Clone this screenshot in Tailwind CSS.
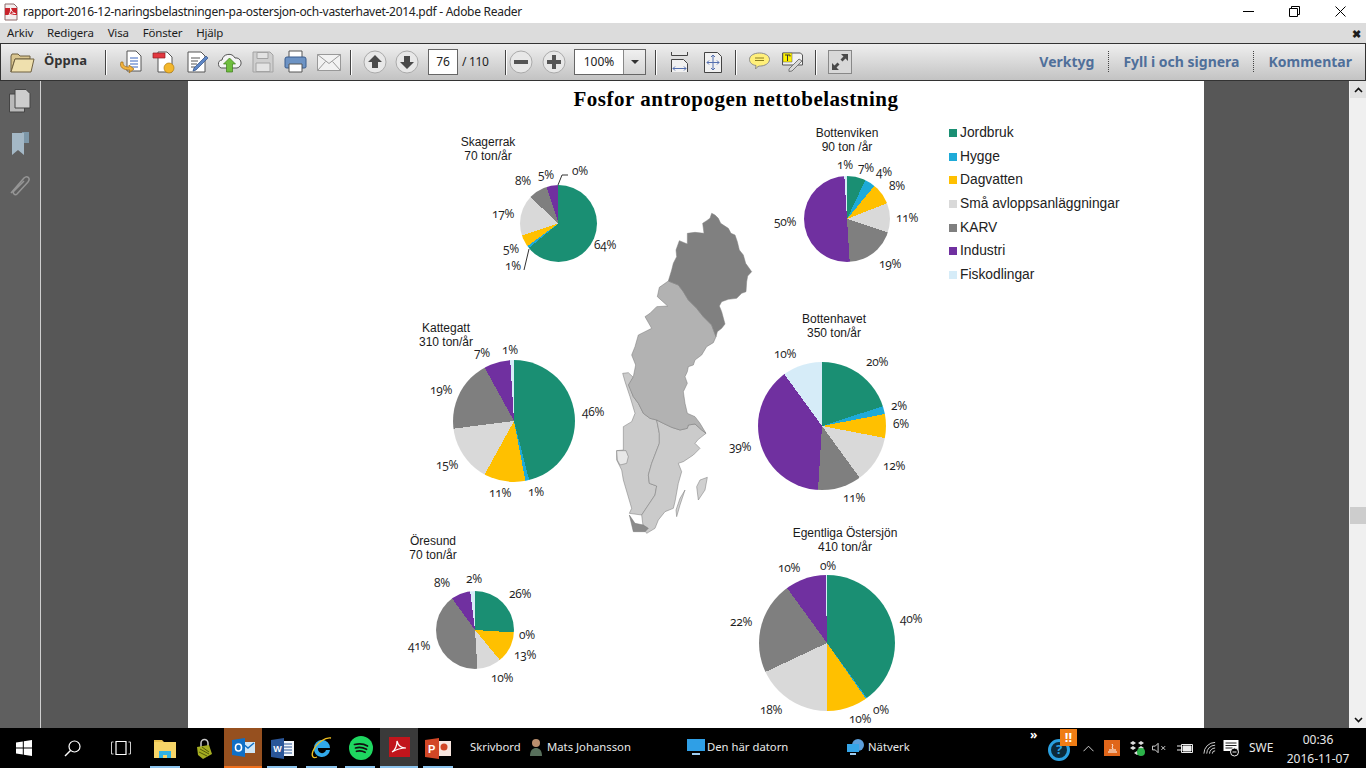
<!doctype html>
<html lang="sv"><head><meta charset="utf-8"><title>Adobe Reader</title>
<script src="https://cdn.jsdelivr.net/npm/@tailwindcss/browser@4"></script></head>
<body class="w-[1366px] h-[768px] overflow-hidden bg-white font-['Noto_Sans',sans-serif] text-black">
<div class="flex flex-col h-[768px]">
<!-- title -->
<div class="h-[23px] flex items-center bg-white shrink-0">
 <svg class="ml-[2px] w-[18px] h-[18px]" viewBox="0 0 18 18"><path d="M3 1h9l3 3v13H3z" fill="#f4eeee" stroke="#8d6b6b"/><path d="M3 5h12v7H3z" fill="#c8232c"/><path d="M6 13c2-2 3-5 2.500-8 1 3 2 5 5 5.500-3 0-5 1-7.500 2.500z" fill="none" stroke="#fff"/></svg>
 <span class="ml-[3px] text-[12px] tracking-[-0.28px] text-[#222] whitespace-nowrap">rapport-2016-12-naringsbelastningen-pa-ostersjon-och-vasterhavet-2014.pdf - Adobe Reader</span>
 <div class="ml-auto flex items-center">
  <div class="w-[46px] flex justify-center"><div class="w-[11px] h-px bg-black"></div></div>
  <div class="w-[46px] flex justify-center"><svg class="w-[11px] h-[11px]" viewBox="0 0 11 11"><path d="M.5 2.500h8v8h-8zM2.500 2.500v-2h8v8h-2" fill="none" stroke="#000"/></svg></div>
  <div class="w-[46px] mr-[3px] flex justify-center"><svg class="w-[11px] h-[11px]" viewBox="0 0 11 11"><path d="M.5.500l10 10M10.500.500l-10 10" stroke="#000"/></svg></div>
 </div>
</div>
<!-- menu -->
<div class="h-[20px] bg-[#dcdcdc] flex items-center text-[11.500px] tracking-[-0.2px] text-[#1c1c1c] pl-[7px] shrink-0">
 <span>Arkiv</span><span class="ml-[14px]">Redigera</span><span class="ml-[14px]">Visa</span><span class="ml-[14px]">Fönster</span><span class="ml-[14px]">Hjälp</span>
 <span class="ml-auto mr-[5px] text-[11px] font-bold leading-none">✖</span>
</div>
<!-- toolbar -->
<div class="h-[38px] shrink-0 flex items-center border-y-[1.5px] border-x border-[#333] bg-gradient-to-b from-[#efefef] to-[#c3c3c3]">
 <svg class="ml-[9px] w-[25px] h-[21px]" viewBox="0 0 25 21"><path d="M1 20V4l1-2h6l2 2h10v3H5L1 20z" fill="#d9c58f" stroke="#6f6040"/><path d="M1 20L5 7h19l-3 13z" fill="#efe0ae" stroke="#6f6040"/></svg>
 <span class="ml-[9px] w-[42px] pb-[2px] text-[13px] font-bold text-[#333]">Öppna</span>
 <div class="ml-[19px] w-px h-[25px] bg-[#444] border-r border-white box-content"></div>
 <div class="ml-[7px] flex items-center">
  <div class="w-[33px] flex justify-center"><svg class="w-[24px] h-[24px]" viewBox="0 0 24 24"><path d="M8 1h9l5 5v15H8z" fill="#fff" stroke="#555"/><path d="M11 8h8M11 11h8M11 14h8M11 17h8" stroke="#3a66c0"/><path d="M2 12c-2 5 2 8 9 8l-1 3 5-4-5-4v2c-4 0-6-1-6-5z" fill="#f2b33d" stroke="#a06a10" stroke-width=".7"/></svg></div>
  <div class="w-[33px] flex justify-center"><svg class="w-[24px] h-[24px]" viewBox="0 0 24 24"><path d="M6 2h9l5 5v15H6z" fill="#fff" stroke="#555"/><path d="M1 3h12v5H1z" fill="#e2383f" stroke="#8c1e22" stroke-width=".7"/><circle cx="17" cy="18" r="5" fill="#f3b72c" stroke="#b27d10" stroke-width=".7"/></svg></div>
  <div class="w-[33px] flex justify-center"><svg class="w-[24px] h-[24px]" viewBox="0 0 24 24"><path d="M3 2h13l4 4v16H3z" fill="#fff" stroke="#555"/><path d="M6 8h9M6 11h7M6 14h6M6 17h4" stroke="#555"/><path d="M9 18l12-12 2 2-12 12-3 1z" fill="#5d86c5" stroke="#2e4e85" stroke-width=".7"/></svg></div>
  <div class="w-[33px] flex justify-center"><svg class="w-[25px] h-[24px]" viewBox="0 0 25 24"><path d="M6 18a4 4 0 0 1-1-8 7 7 0 0 1 13-2 5 5 0 0 1 2 10z" fill="#f4f4f4" stroke="#555"/><path d="M12.500 8l6 6h-3v8h-6v-8h-3z" fill="#6fbe3e" stroke="#3e7d1a" stroke-width=".7"/></svg></div>
  <div class="w-[33px] flex justify-center"><svg class="w-[22px] h-[22px]" viewBox="0 0 22 22"><path d="M1 1h17l3 3v17H1z" fill="#cfcfcf" stroke="#a3a3a3"/><path d="M5 1.500h11v6H5zM4 12h14v8.500H4z" fill="#e3e3e3" stroke="#a3a3a3"/></svg></div>
  <div class="w-[33px] flex justify-center"><svg class="w-[23px] h-[24px]" viewBox="0 0 23 24"><path d="M5 1h13v8H5z" fill="#fff" stroke="#555"/><path d="M1 9q0-2 2-2h17q2 0 2 2v8q0 1-2 1H3q-2 0-2-1z" fill="#6d93c4" stroke="#3a5c8d"/><path d="M5 14h13v8H5z" fill="#fff" stroke="#555"/></svg></div>
  <div class="w-[33px] flex justify-center"><svg class="w-[24px] h-[17px]" viewBox="0 0 24 17"><path d="M.5.500h23v16H.5z" fill="#f2f2f2" stroke="#999"/><path d="M.5.500l11.500 9 11.500-9M.5 16.500l8-9M23.500 16.500l-8-9" fill="none" stroke="#999"/></svg></div>
 </div>
 <div class="ml-[5px] w-px h-[25px] bg-[#444] border-r border-white box-content"></div>
 <div class="ml-[7px] flex">
  <div class="w-[32px] flex justify-center"><svg class="w-[24px] h-[24px]" viewBox="0 0 24 24"><circle cx="12" cy="12" r="11" fill="#e8e8e8" stroke="#aaa"/><path d="M12 5l7 7h-4v6H9v-6H5z" fill="#4a4a4a"/></svg></div>
  <div class="w-[32px] flex justify-center"><svg class="w-[24px] h-[24px]" viewBox="0 0 24 24"><circle cx="12" cy="12" r="11" fill="#e8e8e8" stroke="#aaa"/><path d="M12 19l7-7h-4V6H9v6H5z" fill="#4a4a4a"/></svg></div>
 </div>
 <div class="ml-[5px] w-[30px] h-[26px] bg-white border border-[#666] flex items-center justify-center text-[12px] text-[#222]">76</div>
 <span class="ml-[4px] text-[12px] tracking-[-0.3px] text-[#222] w-[28px] whitespace-nowrap">/ 110</span>
 <div class="ml-[15px] w-px h-[25px] bg-[#444] border-r border-white box-content"></div>
 <div class="ml-[2px] flex gap-[9px]">
  <svg class="w-[24px] h-[24px]" viewBox="0 0 24 24"><circle cx="12" cy="12" r="11" fill="#e8e8e8" stroke="#aaa"/><path d="M5 10h14v4H5z" fill="#555"/></svg>
  <svg class="w-[24px] h-[24px]" viewBox="0 0 24 24"><circle cx="12" cy="12" r="11" fill="#e8e8e8" stroke="#aaa"/><path d="M10 5h4v5h5v4h-5v5h-4v-5H5v-4h5z" fill="#555"/></svg>
 </div>
 <div class="ml-[8px] w-[72px] h-[26px] border border-[#666] bg-white flex">
  <div class="flex-1 flex items-center justify-center text-[12px] text-[#222]">100%</div>
  <div class="w-[22px] border-l border-[#888] bg-gradient-to-b from-[#f0f0f0] to-[#d5d5d5] flex items-center justify-center"><div class="w-0 h-0 border-x-[4px] border-x-transparent border-t-[4px] border-t-[#333]"></div></div>
 </div>
 <div class="ml-[9px] w-px h-[25px] bg-[#444] border-r border-white box-content"></div>
 <div class="ml-[6px] flex">
  <div class="w-[33px] flex justify-center"><svg class="w-[17px] h-[21px]" viewBox="0 0 17 21"><path d="M.5 0v3.500h16V0" fill="#e8e8e8" stroke="#444"/><path d="M.5 20V7.500h12l4 4V20" fill="#f1f1f1" stroke="#444"/><path d="M2 16.500h13M2 16.500l2-2M2 16.500l2 2M15 16.500l-2-2M15 16.500l-2 2" stroke="#5570b0"/></svg></div>
  <div class="w-[33px] flex justify-center"><svg class="w-[18px] h-[21px]" viewBox="0 0 18 21"><path d="M.5.500h13l4 4v16H.5z" fill="#f1f1f1" stroke="#444"/><path d="M9 3v15M3 10.500h12M9 3l-2 2M9 3l2 2M9 18l-2-2M9 18l2-2M3 10.500l2-2M3 10.500l2 2M15 10.500l-2-2M15 10.500l-2 2" stroke="#5570b0" fill="none"/></svg></div>
 </div>
 <div class="ml-[6px] w-px h-[25px] bg-[#444] border-r border-white box-content"></div>
 <div class="ml-[6px] flex">
  <div class="w-[33px] flex justify-center"><svg class="w-[21px] h-[18px]" viewBox="0 0 21 18"><path d="M10.500 1c5.500 0 10 2.500 10 6.500s-5 6.500-9 6.500c-2 0-3 .5-5 3l.5-3.500C3 13 .5 10.500.5 7.500.5 3.500 5 1 10.500 1z" fill="#ffef7a" stroke="#8a8a8a"/><path d="M6 6h9M6 8.500h9" stroke="#8a7d20"/></svg></div>
  <div class="w-[33px] flex justify-center"><svg class="w-[21px] h-[20px]" viewBox="0 0 21 20"><path d="M.5 1h18l2 2v10H.5z" fill="#f2f2f2" stroke="#555"/><path d="M1 1h9v9H1z" fill="#fff200" stroke="#555" stroke-width=".5"/><path d="M3 3h5v1.500M5.500 3v6" stroke="#333" fill="none"/><path d="M7 17L17 7l3 2-10 10-3 .5z" fill="#d9d9d9" stroke="#777"/></svg></div>
 </div>
 <div class="ml-[6px] w-px h-[25px] bg-[#444] border-r border-white box-content"></div>
 <div class="ml-[11px] w-[24px] h-[24px] border border-[#888] bg-[#d8d8d8] flex items-center justify-center"><svg class="w-[20px] h-[20px]" viewBox="0 0 20 20"><path d="M18 2h-7l2.500 2.500-3 3 2 2 3-3L18 9zM2 18h7l-2.500-2.500 3-3-2-2-3 3L2 11z" fill="#4a4a4a"/></svg></div>
 <div class="ml-auto flex items-center text-[14px] font-bold text-[#4f6f9a] pr-[13px] pb-[2px]">
  <span>Verktyg</span><div class="mx-[14px] h-[21px] border-l border-dotted border-[#444]"></div>
  <span>Fyll i och signera</span><div class="mx-[14px] h-[21px] border-l border-dotted border-[#444]"></div>
  <span>Kommentar</span>
 </div>
</div>
<!-- main -->
<div class="flex flex-1 min-h-0">
 <div class="w-[40px] bg-[#5f5f5f] flex flex-col items-center pt-[8px] shrink-0">
  <svg class="w-[22px] h-[24px]" viewBox="0 0 22 24"><path d="M.5 5h15v18H.5z" fill="#b9b9b9" stroke="#444"/><path d="M6 .5h11l4 4V19H6z" fill="#cdcdcd" stroke="#444"/></svg>
  <svg class="w-[17px] h-[23px] mt-[19px]" viewBox="0 0 17 23"><path d="M10 0h7v11h-7z" fill="#7d97a8"/><path d="M0 1h12v22l-6-5-6 5z" fill="#a4b8c6"/></svg>
  <svg class="w-[22px] h-[23px] mt-[19px]" viewBox="0 0 22 23"><path d="M2 19L15 4c3-3 7 0 4 4L8 20c-2 2-5-1-3-3L15 7" fill="none" stroke="#959595" stroke-width="1.500"/></svg>
 </div>
 <div class="w-[1px] bg-[#cfcfcf] shrink-0"></div>
 <div class="flex-1 bg-[#575757] flex justify-start pl-[147px] overflow-hidden">
  <!-- page: free canvas of diagrams -->
  <div class="relative w-[1016px] h-[647px] bg-white shrink-0 overflow-hidden font-['Liberation_Sans',sans-serif] text-[#1a1a1a]">
   <h1 class="absolute left-[548px] top-[19px] -translate-x-1/2 -translate-y-1/2 whitespace-nowrap font-['Liberation_Serif',serif] font-bold text-[21px] tracking-[0.5px] text-black">Fosfor antropogen nettobelastning</h1>

   <!-- map -->
   <svg class="absolute left-[412px] top-[119px] w-[170px] h-[350px]" viewBox="0 0 510 1050">
    <g stroke="#777" stroke-width="1.500" stroke-linejoin="round">
    <polygon fill="#cbcbcb" points="68,520 85,518 100,532 88,555 100,590 115,610 130,640 150,655 170,660 178,700 178,730 155,790 145,825 148,850 170,858 165,885 125,945 88,940 95,925 70,840 65,810 50,780 50,752 70,750 70,680 95,665 105,640 90,590 75,545"/>
    <polygon fill="#cbcbcb" points="170,660 190,670 215,682 240,690 262,685 265,675 285,672 305,690 318,700 295,718 285,730 300,745 280,765 250,785 235,790 245,815 235,850 225,905 220,925 195,935 175,960 165,985 140,1000 130,985 125,945 165,885 170,858 148,850 145,825 155,790 178,730 178,700"/>
    <polygon fill="#b2b2b2" points="205,243 235,255 250,275 265,300 290,325 310,350 335,375 348,410 340,428 320,440 305,465 285,480 280,495 265,500 262,515 255,530 262,550 250,575 255,610 262,640 285,650 300,670 318,700 305,690 285,672 265,675 262,685 240,690 215,682 190,670 170,660 150,655 130,640 115,610 100,590 85,555 100,530 107,495 95,465 105,440 115,405 135,395 155,385 135,350 150,340 170,320 203,318 172,290 178,262"/>
    <polygon fill="#808080" stroke="#808080" points="335,40 345,45 355,55 362,70 385,85 393,100 405,105 412,125 418,150 430,165 437,190 455,215 443,228 440,245 438,275 425,280 410,295 385,298 365,305 358,318 365,335 375,372 365,385 352,395 348,410 335,375 310,350 290,325 265,300 250,275 235,255 205,243 215,210 220,190 230,170 228,150 238,122 262,132 262,100 285,97 312,100 308,70 320,62 330,55"/>
    <polygon fill="#8b8b8b" points="88,945 105,970 130,975 145,985 135,995 100,995"/>
    <polygon fill="#e8e8e8" points="50,752 78,752 85,770 80,790 60,795 52,780"/>
    <polygon fill="#d0d0d0" points="300,840 322,832 315,870 295,900 290,860"/>
    <polygon fill="#d0d0d0" points="255,870 240,915 230,950 228,930 240,895"/>
    </g>
   </svg>

   <!-- pies -->
   <div class="absolute left-[332px] top-[104px] w-[77px] h-[77px] rounded-full bg-[conic-gradient(#1a8f73_0_64%,#1eaad8_64%_65%,#ffc000_65%_70%,#d9d9d9_70%_87%,#7f7f7f_87%_95%,#7030a0_95%_100%)]"></div>
   <div class="absolute left-[616px] top-[95px] w-[86px] h-[86px] rounded-full bg-[conic-gradient(#1a8f73_0_7%,#1eaad8_7%_11%,#ffc000_11%_19%,#d9d9d9_19%_30%,#7f7f7f_30%_49%,#7030a0_49%_99%,#d6ecf8_99%_100%)]"></div>
   <div class="absolute left-[265px] top-[279px] w-[122px] h-[122px] rounded-full bg-[conic-gradient(#1a8f73_0_46%,#1eaad8_46%_47%,#ffc000_47%_58%,#d9d9d9_58%_73%,#7f7f7f_73%_92%,#7030a0_92%_99%,#d6ecf8_99%_100%)]"></div>
   <div class="absolute left-[570px] top-[281px] w-[128px] h-[128px] rounded-full bg-[conic-gradient(#1a8f73_0_20%,#1eaad8_20%_22%,#ffc000_22%_28%,#d9d9d9_28%_40%,#7f7f7f_40%_51%,#7030a0_51%_90%,#d6ecf8_90%_100%)]"></div>
   <div class="absolute left-[248px] top-[510px] w-[78px] h-[78px] rounded-full bg-[conic-gradient(#1a8f73_0_26%,#ffc000_26%_39%,#d9d9d9_39%_49%,#7f7f7f_49%_90%,#7030a0_90%_98%,#d6ecf8_98%_100%)]"></div>
   <div class="absolute left-[571px] top-[494px] w-[136px] h-[136px] rounded-full bg-[conic-gradient(#1a8f73_0_40%,#1eaad8_40%_40.300%,#ffc000_40.300%_50%,#d9d9d9_50%_68%,#7f7f7f_68%_90%,#7030a0_90%_99.700%,#d6ecf8_99.700%_100%)]"></div>

   <!-- leader lines -->
   <svg class="absolute left-0 top-0 w-[1016px] h-[647px] pointer-events-none" viewBox="0 0 1016 647"><path d="M370 104l4-10h6M341 168l-5 21" fill="none" stroke="#333"/></svg>

   <!-- region names -->
   <p class="absolute left-[300px] top-[54px] -translate-x-1/2 text-center text-[12px] leading-[14px] whitespace-nowrap">Skagerrak<br>70 ton/år</p>
   <p class="absolute left-[659px] top-[45px] -translate-x-1/2 text-center text-[12px] leading-[14px] whitespace-nowrap">Bottenviken<br>90 ton /år</p>
   <p class="absolute left-[258px] top-[240px] -translate-x-1/2 text-center text-[12px] leading-[14px] whitespace-nowrap">Kattegatt<br>310 ton/år</p>
   <p class="absolute left-[646px] top-[231px] -translate-x-1/2 text-center text-[12px] leading-[14px] whitespace-nowrap">Bottenhavet<br>350 ton/år</p>
   <p class="absolute left-[245px] top-[453px] -translate-x-1/2 text-center text-[12px] leading-[14px] whitespace-nowrap">Öresund<br>70 ton/år</p>
   <p class="absolute left-[657px] top-[445px] -translate-x-1/2 text-center text-[12px] leading-[14px] whitespace-nowrap">Egentliga Östersjön<br>410 ton/år</p>

   <!-- percent labels -->
   <div class="font-['Open_Sans',serif] oldstyle-nums text-[12px] tracking-[-0.3px] text-[#222]">
    <span class="absolute left-[417px] top-[164px] -translate-x-1/2 -translate-y-1/2">64%</span>
    <span class="absolute left-[392px] top-[90px] -translate-x-1/2 -translate-y-1/2">0%</span>
    <span class="absolute left-[358px] top-[94px] -translate-x-1/2 -translate-y-1/2">5%</span>
    <span class="absolute left-[335px] top-[100px] -translate-x-1/2 -translate-y-1/2">8%</span>
    <span class="absolute left-[315px] top-[133px] -translate-x-1/2 -translate-y-1/2">17%</span>
    <span class="absolute left-[323px] top-[168px] -translate-x-1/2 -translate-y-1/2">5%</span>
    <span class="absolute left-[325px] top-[185px] -translate-x-1/2 -translate-y-1/2">1%</span>

    <span class="absolute left-[657px] top-[84px] -translate-x-1/2 -translate-y-1/2">1%</span>
    <span class="absolute left-[678px] top-[87px] -translate-x-1/2 -translate-y-1/2">7%</span>
    <span class="absolute left-[696px] top-[91px] -translate-x-1/2 -translate-y-1/2">4%</span>
    <span class="absolute left-[709px] top-[105px] -translate-x-1/2 -translate-y-1/2">8%</span>
    <span class="absolute left-[719px] top-[137px] -translate-x-1/2 -translate-y-1/2">11%</span>
    <span class="absolute left-[702px] top-[183px] -translate-x-1/2 -translate-y-1/2">19%</span>
    <span class="absolute left-[597px] top-[141px] -translate-x-1/2 -translate-y-1/2">50%</span>

    <span class="absolute left-[405px] top-[331px] -translate-x-1/2 -translate-y-1/2">46%</span>
    <span class="absolute left-[348px] top-[411px] -translate-x-1/2 -translate-y-1/2">1%</span>
    <span class="absolute left-[312px] top-[412px] -translate-x-1/2 -translate-y-1/2">11%</span>
    <span class="absolute left-[259px] top-[384px] -translate-x-1/2 -translate-y-1/2">15%</span>
    <span class="absolute left-[253px] top-[309px] -translate-x-1/2 -translate-y-1/2">19%</span>
    <span class="absolute left-[294px] top-[272px] -translate-x-1/2 -translate-y-1/2">7%</span>
    <span class="absolute left-[322px] top-[269px] -translate-x-1/2 -translate-y-1/2">1%</span>

    <span class="absolute left-[689px] top-[281px] -translate-x-1/2 -translate-y-1/2">20%</span>
    <span class="absolute left-[711px] top-[325px] -translate-x-1/2 -translate-y-1/2">2%</span>
    <span class="absolute left-[713px] top-[343px] -translate-x-1/2 -translate-y-1/2">6%</span>
    <span class="absolute left-[706px] top-[385px] -translate-x-1/2 -translate-y-1/2">12%</span>
    <span class="absolute left-[666px] top-[417px] -translate-x-1/2 -translate-y-1/2">11%</span>
    <span class="absolute left-[552px] top-[366px] -translate-x-1/2 -translate-y-1/2">39%</span>
    <span class="absolute left-[597px] top-[273px] -translate-x-1/2 -translate-y-1/2">10%</span>

    <span class="absolute left-[332px] top-[513px] -translate-x-1/2 -translate-y-1/2">26%</span>
    <span class="absolute left-[339px] top-[554px] -translate-x-1/2 -translate-y-1/2">0%</span>
    <span class="absolute left-[337px] top-[574px] -translate-x-1/2 -translate-y-1/2">13%</span>
    <span class="absolute left-[314px] top-[597px] -translate-x-1/2 -translate-y-1/2">10%</span>
    <span class="absolute left-[231px] top-[565px] -translate-x-1/2 -translate-y-1/2">41%</span>
    <span class="absolute left-[254px] top-[502px] -translate-x-1/2 -translate-y-1/2">8%</span>
    <span class="absolute left-[286px] top-[498px] -translate-x-1/2 -translate-y-1/2">2%</span>

    <span class="absolute left-[723px] top-[538px] -translate-x-1/2 -translate-y-1/2">40%</span>
    <span class="absolute left-[693px] top-[629px] -translate-x-1/2 -translate-y-1/2">0%</span>
    <span class="absolute left-[672px] top-[638px] -translate-x-1/2 -translate-y-1/2">10%</span>
    <span class="absolute left-[583px] top-[629px] -translate-x-1/2 -translate-y-1/2">18%</span>
    <span class="absolute left-[553px] top-[541px] -translate-x-1/2 -translate-y-1/2">22%</span>
    <span class="absolute left-[601px] top-[487px] -translate-x-1/2 -translate-y-1/2">10%</span>
    <span class="absolute left-[640px] top-[485px] -translate-x-1/2 -translate-y-1/2">0%</span>
   </div>

   <!-- legend -->
   <ul class="absolute left-[761px] top-[44px] flex flex-col gap-[7.700px] text-[13.800px] leading-[16px] text-[#222]">
    <li class="flex items-center gap-[3px]"><i class="w-[8px] h-[8px] bg-[#1a8f73]"></i>Jordbruk</li>
    <li class="flex items-center gap-[3px]"><i class="w-[8px] h-[8px] bg-[#1eaad8]"></i>Hygge</li>
    <li class="flex items-center gap-[3px]"><i class="w-[8px] h-[8px] bg-[#ffc000]"></i>Dagvatten</li>
    <li class="flex items-center gap-[3px]"><i class="w-[8px] h-[8px] bg-[#d9d9d9]"></i>Små avloppsanläggningar</li>
    <li class="flex items-center gap-[3px]"><i class="w-[8px] h-[8px] bg-[#7f7f7f]"></i>KARV</li>
    <li class="flex items-center gap-[3px]"><i class="w-[8px] h-[8px] bg-[#7030a0]"></i>Industri</li>
    <li class="flex items-center gap-[3px]"><i class="w-[8px] h-[8px] bg-[#d6ecf8]"></i>Fiskodlingar</li>
   </ul>
  </div>
 </div>
 <div class="w-[17px] bg-[#f0f0f0] shrink-0 flex flex-col items-center pl-[1px]">
  <div class="w-full h-[17px] bg-[#e2e2e2] flex items-center justify-center"><svg class="w-[9px] h-[6px]" viewBox="0 0 9 6"><path d="M1 5l3.500-3.500L8 5" fill="none" stroke="#111" stroke-width="1.600"/></svg></div>
  <div class="w-full h-[17px] bg-[#cdcdcd] mt-[409px]"></div>
  <div class="w-full h-[17px] mt-auto flex items-center justify-center"><svg class="w-[9px] h-[6px]" viewBox="0 0 9 6"><path d="M1 1l3.500 3.500L8 1" fill="none" stroke="#111" stroke-width="1.600"/></svg></div>
 </div>
</div>
<!-- taskbar -->
<div class="h-[40px] bg-black shrink-0 flex text-[11.300px] text-[#e8e8e8]">
 <div class="w-[48px] flex items-center justify-center"><svg class="w-[16px] h-[16px]" viewBox="0 0 16 16"><path d="M0 2.500l6.800-1v6H0zM7.800 1.300L16 0v7.500H7.800zM0 8.500h6.800v6l-6.800-1zM7.800 8.500H16V16l-8.200-1.300z" fill="#fff"/></svg></div>
 <div class="w-[48px] flex items-center justify-center"><svg class="w-[17px] h-[17px]" viewBox="0 0 17 17"><circle cx="10.500" cy="6.500" r="5.500" fill="none" stroke="#fff" stroke-width="1.200"/><path d="M6.500 10.500L1 16" stroke="#fff" stroke-width="1.400"/></svg></div>
 <div class="w-[49px] flex items-center justify-center"><svg class="w-[20px] h-[14px]" viewBox="0 0 20 14"><path d="M5 .5h10v13H5z" fill="none" stroke="#fff" stroke-width="1.200"/><path d="M2.500 1H.5v12h2M17.500 1h2v12h-2" fill="none" stroke="#ccc"/></svg></div>
 <div class="w-[40px] relative flex items-center justify-center"><svg class="w-[22px] h-[19px]" viewBox="0 0 22 19"><path d="M0 3V1h8l2 2z" fill="#e8c04e"/><path d="M0 3h22v16H0z" fill="#f6d568"/><path d="M5 19v-7h12v7h-4v-3H9v3z" fill="#31b3e6"/></svg><div class="absolute bottom-0 left-[5px] w-[30px] h-[2px] bg-[#8cc4ee]"></div></div>
 <div class="w-[39px] flex items-center justify-center"><svg class="w-[15px] h-[22px]" viewBox="0 0 15 22"><path d="M4 10V6a3.500 3.500 0 0 1 7 0v4" fill="none" stroke="#c7c7c7" stroke-width="1.500"/><path d="M0 10l12-2 3 9-9 5-5-4z" fill="#a5ad21"/><path d="M3 12l9 5M2 15l8 4M5 10l7 5" stroke="#525a08"/></svg></div>
 <div class="w-[38px] bg-[#96501f] flex items-center justify-center border-b-[2px] border-[#f0701c]"><svg class="w-[23px] h-[19px]" viewBox="0 0 23 19"><path d="M9 4h14v11H9z" fill="#cfe6f6"/><path d="M10 5l6 5 6-5" fill="none" stroke="#0f6fc6" stroke-width="1.400"/><path d="M0 2l13-2v19L0 17z" fill="#0f6fc6"/><ellipse cx="6.500" cy="9.500" rx="3" ry="3.500" fill="none" stroke="#fff" stroke-width="1.600"/></svg></div>
 <div class="w-[40px] relative flex items-center justify-center"><svg class="w-[23px] h-[21px]" viewBox="0 0 23 21"><path d="M9 3h14v15H9z" fill="#f4f7fb"/><path d="M13 6h8M13 9h8M13 12h8M13 15h8" stroke="#2a5699"/><path d="M0 2l13-2v21L0 19z" fill="#2a5699"/><text x="2.300" y="14" font-size="9" font-weight="700" fill="#fff" font-family="Liberation Sans">W</text></svg><div class="absolute bottom-0 left-[5px] w-[30px] h-[2px] bg-[#8cc4ee]"></div></div>
 <div class="w-[39px] relative flex items-center justify-center"><svg class="w-[24px] h-[24px]" viewBox="0 0 24 24"><path d="M4 12a8 8 0 0 1 16 0H8a4 4 0 0 0 8 2h4a8 8 0 0 1-16-2z" fill="#31a9ea"/><path d="M9 7h6a3 3 0 0 0-6 0z" fill="#31a9ea"/><path d="M21 2c-5-1-14 4-18 13-2 5 0 8 4 6" fill="none" stroke="#f0c020" stroke-width="1.300"/></svg><div class="absolute bottom-0 left-[4px] w-[31px] h-[2px] bg-[#8cc4ee]"></div></div>
 <div class="w-[39px] relative flex items-center justify-center"><svg class="w-[24px] h-[24px]" viewBox="0 0 24 24"><circle cx="12" cy="12" r="12" fill="#1ed760"/><path d="M5.500 8.500c4-1 9-1 13 1.500M6.500 12c3.500-1 7.500-.5 11 1.300M7.500 15.300c3-.8 6-.4 8.600 1" fill="none" stroke="#111" stroke-width="1.700" stroke-linecap="round"/></svg><div class="absolute bottom-0 left-[4px] w-[30px] h-[2px] bg-[#8cc4ee]"></div></div>
 <div class="w-[38px] bg-[#3a3a3a] flex items-center justify-center border-b-[2px] border-[#8cc4ee]"><svg class="w-[21px] h-[20px]" viewBox="0 0 21 20"><path d="M0 0h21v20H0z" fill="#c1151c"/><path d="M3 15c3-2 5-6 5-11 1 4 3 7 9 7-5 0-9 1-14 4z" fill="none" stroke="#fff" stroke-width="1.200"/></svg></div>
 <div class="w-[40px] relative flex items-center justify-center"><svg class="w-[26px] h-[21px]" viewBox="0 0 26 21"><path d="M12 3h14v15H12z" fill="#f8e6df"/><circle cx="19" cy="9" r="3.500" fill="#d24726"/><path d="M0 2l14-2v21L0 19z" fill="#d24726"/><text x="3" y="15" font-size="11" font-weight="700" fill="#fff" font-family="Liberation Sans">P</text></svg><div class="absolute bottom-0 left-[5px] w-[30px] h-[2px] bg-[#8cc4ee]"></div></div>
 <div class="flex items-center h-[40px] pb-[2px]">
  <span class="ml-[12px] w-[59px]">Skrivbord</span>
  <svg class="w-[14px] h-[18px]" viewBox="0 0 14 18"><circle cx="7" cy="5" r="4" fill="#b98e6d"/><path d="M1 18c0-6 3-8 6-8s6 2 6 8z" fill="#58705c"/></svg>
  <span class="ml-[4px] w-[140px]">Mats Johansson</span>
  <svg class="w-[18px] h-[16px]" viewBox="0 0 18 16"><path d="M0 0h18v12H0z" fill="#2f9fe6"/><path d="M5 14h8v2H5z" fill="#9fcdf0"/></svg>
  <span class="ml-[2px] w-[140px]">Den här datorn</span>
  <svg class="w-[18px] h-[17px]" viewBox="0 0 18 17"><circle cx="11" cy="6" r="6" fill="#5b9fdc"/><path d="M0 5h12v8H0z" fill="#35a5e8"/><path d="M3 14h6v2H3z" fill="#9fcdf0"/></svg>
  <span class="ml-[3px]">Nätverk</span>
 </div>
 <div class="ml-auto flex items-center">
  <div class="relative w-[22px] h-[22px] mt-[4px] rounded-full border-[3px] border-[#2aa0e0] bg-[#0c2a3a] flex items-center justify-center text-[13px] font-bold text-[#2aa0e0]">?
   <span class="absolute left-[-21px] top-[-13px] text-[12px] font-bold leading-none text-white">»</span>
   <div class="absolute left-[9px] top-[-13px] w-[17px] h-[17px] bg-[#ef7d14] text-white text-[13px] leading-[17px] font-bold text-center">!!</div>
  </div>
  <svg class="ml-[13px] w-[11px] h-[7px]" viewBox="0 0 12 7"><path d="M.5 6.500L6 1l5.500 5.500" fill="none" stroke="#ddd"/></svg>
  <div class="ml-[10px] w-[16px] h-[16px] bg-[#e0661a] flex items-center justify-center"><svg class="w-[11px] h-[11px]" viewBox="0 0 11 11"><path d="M1 9h9M2 7h7M5 1c2 2-1 3 1 5" fill="none" stroke="#fff"/></svg></div>
  <svg class="ml-[9px] w-[16px] h-[16px]" viewBox="0 0 16 16"><path d="M1 3l3-2 3 2-3 2zM9 3l3-2 3 2-3 2zM1 8l3-2 3 2-3 2zM9 8l3-2 3 2-3 2zM5 13l3-2 3 2-3 2z" fill="#ddd"/><circle cx="12" cy="12" r="4" fill="#2cb34a"/></svg>
  <svg class="ml-[7px] w-[15px] h-[12px]" viewBox="0 0 16 12"><path d="M.5 4h3l3-3v10l-3-3h-3zM10 4l4 4M14 4l-4 4" fill="none" stroke="#ddd"/></svg>
  <svg class="ml-[10px] w-[16px] h-[12px]" viewBox="0 0 16 12"><path d="M4.500 2.500h11v8h-11z" fill="none" stroke="#eee"/><path d="M6 4h8v5H6zM0 4h4M0 8h4" fill="#eee" stroke="#eee"/></svg>
  <svg class="ml-[10px] w-[14px] h-[14px]" viewBox="0 0 15 14"><path d="M1 13a12 12 0 0 1 12-12M4 13a9 9 0 0 1 9-9M7 13a6 6 0 0 1 6-6M10 13a3 3 0 0 1 3-3" fill="none" stroke="#ddd"/></svg>
  <svg class="ml-[6px] w-[17px] h-[17px]" viewBox="0 0 16 17"><path d="M0 0h15v11H0z" fill="#fff"/><path d="M2 3h11M2 5.500h11M2 8h7" stroke="#222"/><circle cx="11" cy="12" r="4" fill="#000" stroke="#eee"/><path d="M9 12h4" stroke="#eee"/></svg>
  <span class="ml-[9px] w-[33px] text-[12px]">SWE</span>
  <div class="w-[72px] mr-[12px] text-center text-[12px] leading-[19px] pt-[1px] whitespace-nowrap"><div>00:36</div><div>2016-11-07</div></div>
 </div>
</div>
</div>
</body></html>
